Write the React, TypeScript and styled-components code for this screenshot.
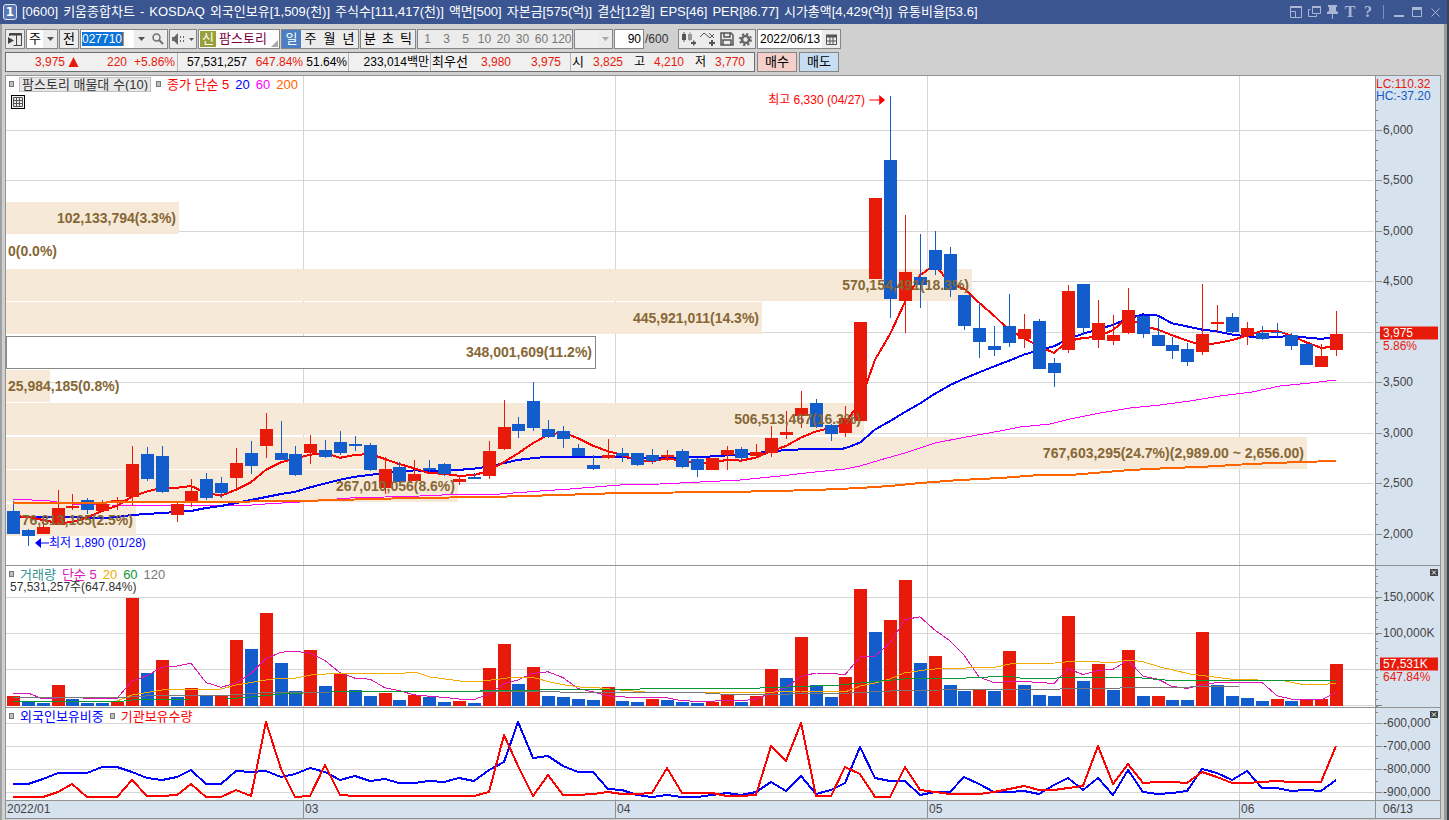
import React from "react";
import styled, { createGlobalStyle } from "styled-components";

const GlobalStyle = createGlobalStyle`
  * { box-sizing: border-box; }
  body { margin: 0; background: #c9c9c9; }
  body, button, input, select {
    font-family: "Liberation Sans", "Noto Sans CJK KR", sans-serif;
    font-size: 13px;
    line-height: 16px;
  }
`;

const RED = "#e81a0a";
const BLUE = "#125ccb";

/* ---------- data ---------- */

// [direction, high, body top, body bottom, low], in the plot's vertical units
type Candle = ["R" | "B", number, number, number, number];
const candles: Candle[] = [
  ["B", 501, 511, 534, 534], ["B", 529, 530, 536, 546], ["R", 522, 527, 534, 534], ["R", 490, 508, 525, 525],
  ["R", 494, 506, 508, 510], ["B", 498, 500, 510, 514], ["R", 500, 504, 511, 511], ["R", 497, 500, 503, 510],
  ["R", 446, 464, 497, 506], ["B", 447, 454, 479, 481], ["B", 446, 456, 492, 493], ["R", 502, 504, 515, 522],
  ["R", 479, 491, 503, 507], ["B", 473, 479, 498, 500], ["B", 477, 483, 493, 498], ["R", 448, 463, 478, 488],
  ["B", 441, 453, 466, 474], ["R", 413, 429, 446, 458], ["B", 421, 453, 460, 460], ["B", 446, 454, 475, 476],
  ["R", 435, 444, 453, 464], ["B", 440, 450, 457, 458], ["B", 431, 442, 453, 455], ["B", 436, 444, 446, 451],
  ["B", 443, 445, 470, 471], ["R", 457, 469, 488, 494], ["B", 462, 467, 482, 482], ["R", 460, 474, 481, 481],
  ["B", 460, 468, 470, 472], ["B", 463, 464, 474, 476], ["R", 476, 479, 482, 485], ["B", 473, 477, 479, 479],
  ["R", 441, 451, 476, 479], ["R", 400, 427, 449, 450], ["B", 417, 424, 431, 438], ["B", 382, 401, 428, 431],
  ["B", 420, 429, 437, 438], ["B", 426, 431, 439, 448], ["B", 444, 448, 456, 456], ["B", 455, 465, 469, 470],
  ["R", 439, 455, 458, 459], ["B", 448, 453, 456, 462], ["B", 453, 453, 465, 466], ["B", 449, 455, 461, 464],
  ["R", 450, 455, 457, 461], ["B", 449, 451, 467, 468], ["B", 458, 459, 470, 477], ["R", 458, 458, 470, 470],
  ["R", 446, 450, 455, 470], ["B", 447, 449, 458, 461], ["R", 444, 452, 456, 457], ["R", 426, 438, 453, 457],
  ["R", 411, 432, 435, 439], ["R", 391, 408, 416, 428], ["B", 399, 403, 427, 428], ["B", 424, 425, 434, 441],
  ["R", 406, 418, 433, 437], ["R", 322, 322, 421, 421], ["R", 198, 198, 279, 279], ["B", 96, 160, 299, 318],
  ["R", 215, 272, 301, 333], ["B", 234, 277, 285, 308], ["B", 231, 250, 270, 275], ["B", 247, 254, 290, 297],
  ["B", 295, 295, 326, 330], ["B", 303, 328, 342, 358], ["B", 326, 346, 350, 356], ["B", 294, 326, 343, 347],
  ["R", 314, 329, 339, 348], ["B", 319, 321, 369, 369], ["B", 358, 363, 373, 387], ["R", 285, 291, 350, 353],
  ["B", 284, 284, 328, 335], ["R", 300, 323, 340, 348], ["R", 315, 335, 341, 345], ["R", 288, 310, 333, 334],
  ["B", 315, 316, 334, 338], ["B", 318, 335, 346, 346], ["B", 337, 345, 351, 359], ["B", 343, 349, 362, 366],
  ["R", 284, 334, 352, 355], ["R", 305, 322, 324, 332], ["B", 313, 317, 332, 333], ["R", 322, 328, 336, 345],
  ["B", 326, 333, 339, 340], ["B", 323, 332, 333, 337], ["B", 333, 335, 346, 350], ["B", 343, 344, 365, 365],
  ["R", 344, 356, 367, 367], ["R", 311, 334, 350, 356],
];

const volumeTops = [
  696, 702, 703, 685, 699, 703, 703, 702, 598, 673, 660, 697, 688, 695, 696, 640, 649, 613, 663, 691,
  650, 686, 674, 690, 696, 693, 700, 695, 697, 702, 701, 703, 668, 644, 684, 667, 696, 697, 699, 700,
  687, 701, 702, 699, 700, 702, 703, 702, 694, 702, 696, 669, 678, 637, 685, 697, 677, 589, 632, 620,
  580, 663, 656, 685, 691, 690, 691, 651, 685, 695, 696, 616, 681, 664, 690, 650, 696, 696, 700, 700,
  632, 685, 696, 698, 701, 699, 701, 700, 699, 664,
];
const volumeColors =
  "RBBRBBBRRBRBRBRRBRBBRBRBBRBRBBRBRRBRBBBBRBBRBBBRRBRRBRBBRRBRRBRBBRBRBBBRBRBRBRBBRBBBBRBRRR";

const foreignShare = [
  784, 784, 779, 773, 773, 773, 767, 767, 772, 778, 780, 777, 770, 784, 784, 771, 772, 771, 777, 774,
  768, 772, 780, 776, 781, 779, 783, 783, 781, 782, 778, 781, 770, 762, 722, 758, 756, 766, 772, 772,
  789, 790, 795, 797, 795, 797, 797, 795, 793, 795, 792, 782, 791, 776, 794, 790, 783, 747, 778, 781,
  781, 795, 792, 792, 777, 784, 792, 792, 791, 794, 785, 778, 790, 778, 795, 770, 792, 794, 793, 791,
  769, 773, 780, 771, 788, 788, 791, 790, 791, 780,
];
const institutionHoldings = [
  797, 797, 797, 792, 784, 797, 797, 797, 780, 796, 796, 795, 784, 797, 797, 790, 796, 722, 769, 797,
  796, 765, 795, 796, 796, 796, 796, 796, 796, 796, 796, 796, 792, 735, 766, 796, 775, 795, 795, 794,
  792, 794, 794, 793, 768, 793, 793, 793, 796, 796, 795, 746, 761, 723, 796, 796, 767, 774, 797, 797,
  767, 790, 792, 794, 794, 794, 792, 789, 786, 790, 790, 788, 786, 746, 784, 764, 783, 782, 782, 783,
  772, 777, 783, 783, 782, 781, 782, 782, 782, 746,
];

/* ---------- chart helpers ---------- */

const centre = (i: number) => Math.round(13 + (i * 1323) / 89);

const movingAverage = (values: number[], span: number, lead: number[]) =>
  values.map((_, i) => {
    if (i < span - 1) return lead[i];
    const part = values.slice(i - span + 1, i + 1);
    return part.reduce((a, b) => a + b, 0) / span;
  });

const seriesPoints = (values: number[]) => values.map((v, i) => `${centre(i)},${v.toFixed(1)}`).join(" ");

const closes = candles.map(([dir, , top, bottom]) => (dir === "R" ? top : bottom));
const priceMa5 = movingAverage(closes, 5, [516, 517, 520, 523]);
const priceMa20 = movingAverage(
  closes, 20,
  [517, 517, 517, 517, 517, 518, 518, 517, 515, 514, 513, 512, 511, 508, 506, 503, 500, 497, 494],
);
const volumeMa5 = movingAverage(volumeTops, 5, [693, 693, 699, 698]);

const priceMa60 =
  "13,499 50,501 72,504 110,505 240,506 265,504 300,502 350,498 385,497 420,496 465,494 500,494 540,491 570,489 620,485 660,484 700,482 740,480 780,476 815,472 845,469 860,466 880,460 905,453 935,443 966,437 1000,431 1020,427 1050,424 1070,419 1100,413 1130,408 1160,405 1190,401 1220,396 1252,392 1280,386 1310,383 1336,380";
const priceMa200 =
  "13,503 200,502 300,501 410,498 490,497 560,495 620,493 730,492 815,490 860,488 890,486 920,483 960,480 1000,478 1040,475 1070,475 1130,470 1170,468 1200,467 1250,464 1300,462 1336,461";
const volumeMa20 =
  "13,702 50,701 117,701 132,695 162,690 192,689 221,689 236,685 266,680 281,678 296,678 311,675 341,673 405,673 415,672 430,677 445,679 460,681 483,681 500,679 515,677 535,678 550,682 565,685 580,687 600,688 620,690 645,692 750,693 800,691 845,692 860,686 875,683 890,679 904,673 925,670 945,668 966,668 996,667 1010,664 1055,663 1075,661 1090,661 1100,662 1117,662 1130,660 1144,662 1160,667 1190,674 1230,679 1285,681 1300,684 1320,685 1336,683";
const volumeMa60 =
  "13,701 117,702 132,700 190,699 226,699 250,697 281,694 303,693 330,692 480,691 500,690 540,690 640,689 760,688 790,687 840,685 870,682 904,679 930,678 966,678 1010,676 1020,678 1050,679 1065,677 1130,677 1165,680 1336,680";
const volumeMa120 =
  "13,697 130,697 160,695 230,695 260,693 330,692 480,692 540,691 560,692 690,692 720,694 790,694 850,693 890,691 940,690 966,689 1060,689 1070,688 1120,688 1140,687 1190,687 1240,686 1336,686";

const monthLines = [303, 615, 927, 1239];

/* top and bottom of each pane, in plot units */
const PRICE = { top: 76, height: 489 };
const VOLUME = { top: 566, height: 141 };
const HOLDING = { top: 708, height: 92 };
const PLOT_LEFT = 6;
const PLOT_WIDTH = 1369;

const px = (x: number) => `${((x - PLOT_LEFT) / PLOT_WIDTH) * 100}%`;
const py = (y: number, pane: { top: number; height: number }) => `${((y - pane.top) / pane.height) * 100}%`;

type Band = { y: number; right: number; text: string; current?: boolean };
const bands: Band[] = [
  { y: 202, right: 179, text: "102,133,794(3.3%)" },
  { y: 235, right: 6, text: "0(0.0%)" },
  { y: 269, right: 972, text: "570,154,491(18.3%)" },
  { y: 302, right: 762, text: "445,921,011(14.3%)" },
  { y: 336, right: 595, text: "348,001,609(11.2%)", current: true },
  { y: 370, right: 50, text: "25,984,185(0.8%)" },
  { y: 403, right: 864, text: "506,513,467(16.3%)" },
  { y: 437, right: 1307, text: "767,603,295(24.7%)(2,989.00 ~ 2,656.00)" },
  { y: 470, right: 458, text: "267,010,056(8.6%)" },
  { y: 504, right: 136, text: "76,813,185(2.5%)" },
];

/* ---------- window ---------- */

const Window = styled.div`
  display: flex;
  flex-direction: column;
  height: 100vh;
  min-height: 560px;
  background: #d0d0d0;
  border-right: 2px solid #3c4450;
`;

const TitleBar = styled.header`
  display: flex;
  align-items: center;
  height: 24px;
  flex: none;
  padding: 0 5px 0 3px;
  background: #3a5590;
  color: #fff;
`;

const WindowNumber = styled.span`
  width: 14px;
  height: 16px;
  margin-right: 5px;
  border: 1px solid #dfe6f5;
  border-radius: 3px;
  background: #5b78b4;
  font: bold 12px/14px "DejaVu Sans", sans-serif;
  text-align: center;
`;

const TitleText = styled.h1`
  display: flex;
  gap: 5px;
  flex: 1;
  min-width: 0;
  margin: 0;
  font-size: 13px;
  font-weight: normal;
  white-space: nowrap;
`;

const TitleButtons = styled.div`
  display: flex;
  align-items: center;
  gap: 4px;
  color: #a9b6d4;
`;

const TitleButton = styled.button`
  display: flex;
  align-items: center;
  justify-content: center;
  width: 14px;
  height: 18px;
  padding: 0;
  border: 0;
  background: none;
  color: inherit;
  font: bold 16px/18px "Liberation Serif", serif;
`;

const TitleDivider = styled.span`
  width: 1px;
  height: 14px;
  margin: 0 4px;
  background: #8090b8;
`;

/* ---------- tool bar ---------- */

const Body = styled.main`
  display: flex;
  flex-direction: column;
  flex: 1;
  min-height: 0;
  padding: 5px 3px 1px 3px;
  border-left: 2px solid #a0a0a0;
  border-right: 3px solid #9b9b9b;
`;

const Toolbar = styled.div<{ $gap: number }>`
  display: flex;
  flex: none;
  gap: ${(p) => p.$gap}px;
  height: 20px;
  margin-bottom: 3px;
`;

const Group = styled.div`
  display: flex;
  align-items: stretch;
  border: 1px solid #858585;
  background: #efefef;
  > * + * { border-left: 1px solid #a0a0a0; }
`;

const ToolButton = styled.button<{ $w?: number; $active?: boolean; $muted?: boolean }>`
  display: flex;
  align-items: center;
  justify-content: center;
  width: ${(p) => p.$w ?? 19}px;
  padding: 0;
  border: 0;
  background: ${(p) => (p.$active ? "#4a7fc4" : "#ececec")};
  color: ${(p) => (p.$active ? "#fff" : p.$muted ? "#777" : "#000")};
  font-size: ${(p) => (p.$muted ? 12 : 13)}px;
  white-space: nowrap;
`;

const Field = styled.input<{ $w: number; $align?: string }>`
  width: ${(p) => p.$w}px;
  padding: 0 2px;
  border: 0;
  background: #fff;
  color: #000;
  text-align: ${(p) => p.$align ?? "left"};
  font-size: 12px;
`;

const CodeField = styled.div`
  display: flex;
  align-items: center;
  width: 53px;
  padding: 0 1px;
  background: #fff;
`;

const CodeInput = styled.input`
  width: 42px;
  height: 14px;
  padding: 0;
  border: 0;
  border-right: 1px solid #f08020;
  background: #0a74d8;
  color: #fff;
  font-size: 12px;
`;

const PeriodSelect = styled.select`
  width: 16px;
  padding: 0 2px;
  border: 0;
  appearance: none;
  background: #fff;
`;

const EmptySelect = styled.select`
  width: 24px;
  border: 0;
  appearance: none;
  background: #efefef;
`;

const StockName = styled.button`
  display: flex;
  align-items: center;
  gap: 3px;
  width: 82px;
  padding: 0 0 0 1px;
  position: relative;
  border: 1px solid #858585;
  background: #fff;
  color: #800040;
  white-space: nowrap;
`;

const StockMark = styled.span`
  width: 16px;
  background: #97a03b;
  color: #fff;
  text-align: center;
`;

const Corner = styled.svg`
  position: absolute;
  right: 1px;
  bottom: 1px;
`;

const Total = styled.span`
  width: 32px;
  line-height: 20px;
  color: #333;
  font-size: 12px;
`;

const Quotes = styled.div`
  display: flex;
  align-items: center;
  width: 750px;
  border: 1px solid #6f6f6f;
  background: #f0f0f0;
  font-size: 12px;
`;

const QuoteCell = styled.div<{ $w: number }>`
  display: flex;
  align-items: center;
  width: ${(p) => p.$w}px;
  height: 18px;
  border-right: 1px solid #b4b4b4;
  &:last-child { border-right: 0; }
`;

const Quote = styled.span<{ $w: number; $red?: boolean }>`
  width: ${(p) => p.$w}px;
  flex: none;
  color: ${(p) => (p.$red ? RED : "#000")};
  text-align: right;
  white-space: nowrap;
`;

const QuoteLabel = styled.span<{ $w: number }>`
  width: ${(p) => p.$w}px;
  flex: none;
  padding-left: 1px;
  font-size: 13px;
  white-space: nowrap;
`;

const OrderButton = styled.button<{ $bg: string }>`
  width: 40px;
  padding: 0;
  border: 1px solid #858585;
  background: ${(p) => p.$bg};
`;

/* ---------- chart ---------- */

const ChartFrame = styled.section`
  display: grid;
  grid-template-columns: minmax(0, 1fr) 65px;
  grid-template-rows: 490fr 142fr 93fr 17px;
  flex: 1;
  min-height: 0;
  border: 1px solid #929292;
  background: #fff;
`;

const Pane = styled.div`
  position: relative;
  min-height: 0;
  overflow: hidden;
  border-bottom: 1px solid #929292;
`;

const AxisPane = styled(Pane)`
  border-left: 1px solid #929292;
  background: #d7e2ef;
`;

const Plot = styled.svg`
  display: block;
  width: 100%;
  height: 100%;
`;

const Legend = styled.div`
  position: absolute;
  top: 0;
  left: 3px;
  display: flex;
  align-items: center;
  gap: 6px;
  height: 16px;
  white-space: nowrap;
`;

const Bullet = styled.span`
  width: 5px;
  height: 6px;
  border: 1px solid #777;
  background: #c0c0c0;
`;

const LegendText = styled.span<{ $c: string; $boxed?: boolean }>`
  padding: ${(p) => (p.$boxed ? "0 2px" : "0")};
  outline: ${(p) => (p.$boxed ? "1px solid #c0c0c0" : "none")};
  background: ${(p) => (p.$boxed ? "#e8e8e8" : "none")};
  color: ${(p) => p.$c};
  line-height: 13px;
`;

const GridButton = styled.button`
  position: absolute;
  top: 19px;
  left: 5px;
  width: 14px;
  height: 14px;
  padding: 0;
  border: 1px solid #000;
  background: #eee;
  line-height: 0;
`;

const VolumeNote = styled.div`
  position: absolute;
  top: 15px;
  left: 4px;
  color: #333;
  font-size: 12px;
  line-height: 13px;
`;

const BandLabel = styled.span<{ $left?: boolean }>`
  position: absolute;
  color: #866735;
  font: bold 14px/16px "Liberation Sans", sans-serif;
  white-space: nowrap;
  transform: translate(${(p) => (p.$left ? "0" : "-100%")}, -50%);
`;

const Callout = styled.span<{ $c: string; $before?: boolean }>`
  position: absolute;
  display: flex;
  align-items: center;
  gap: ${(p) => (p.$before ? 4 : 0)}px;
  color: ${(p) => p.$c};
  font-size: 12px;
  white-space: nowrap;
  transform: translate(${(p) => (p.$before ? "-100%" : "0")}, -50%);
`;

const AxisLabel = styled.span<{ $c?: string; $x?: number }>`
  position: absolute;
  left: ${(p) => p.$x ?? 7}px;
  color: ${(p) => p.$c ?? "#444"};
  font-size: 12px;
  line-height: 12px;
  white-space: nowrap;
  transform: translateY(-50%);
`;

const PriceTag = styled(AxisLabel)`
  left: 4px;
  width: 58px;
  height: 13px;
  padding-left: 3px;
  background: ${RED};
  color: #fff;
  line-height: 13px;
`;

const CloseButton = styled.button`
  position: absolute;
  top: 3px;
  right: 2px;
  width: 8px;
  height: 7px;
  padding: 0;
  border: 0;
  background: #444;
  line-height: 0;
`;

const DateAxis = styled.div`
  position: relative;
  background: #d7e2ef;
`;

const DateLabel = styled.span<{ $line?: boolean }>`
  position: absolute;
  top: 0;
  height: 17px;
  padding-left: 1px;
  border-left: ${(p) => (p.$line ? "1px solid #929292" : "0")};
  color: #444;
  font-size: 12px;
`;

const LastDate = styled.div`
  padding-left: 7px;
  border-left: 1px solid #929292;
  background: #d7e2ef;
  color: #444;
  font-size: 12px;
`;

/* ---------- parts ---------- */

const DownArrow = ({ color = "#555" }: { color?: string }) => (
  <svg width="7" height="4" viewBox="0 0 7 4"><path d="M0 0h7L3.5 4z" fill={color} /></svg>
);

const MonthGrid = () => (
  <>
    {monthLines.map((x) => (
      <rect key={x} x={x} y="0" width="1" height="820" fill="#d6d6d6" />
    ))}
  </>
);

const HLines = ({ ys }: { ys: number[] }) => (
  <>
    {ys.map((y) => (
      <rect key={y} x="6" y={y} width="1368" height="1" fill="#d6d6d6" />
    ))}
  </>
);

const Line = ({ points, color, width = 2 }: { points: string; color: string; width?: number }) => (
  <polyline points={points} fill="none" stroke={color} strokeWidth={width} strokeLinejoin="round" vectorEffect="non-scaling-stroke" />
);

const PanePlot = ({ pane, children }: { pane: { top: number; height: number }; children: React.ReactNode }) => (
  <Plot viewBox={`${PLOT_LEFT} ${pane.top} ${PLOT_WIDTH} ${pane.height}`} preserveAspectRatio="none" shapeRendering="crispEdges">
    {children}
  </Plot>
);

const Ticks = ({ pane, major, minor }: { pane: { top: number; height: number }; major: number[]; minor: number[] }) => (
  <Plot viewBox={`0 ${pane.top} 64 ${pane.height}`} preserveAspectRatio="none" shapeRendering="crispEdges">
    {minor.map((y) => <rect key={`m${y}`} x="0" y={Math.round(y)} width="2" height="1" fill="#888" />)}
    {major.map((y) => <rect key={y} x="0" y={y} width="6" height="1" fill="#888" />)}
  </Plot>
);

const CloseMark = () => (
  <CloseButton aria-label="닫기">
    <svg width="8" height="7" viewBox="0 0 8 7"><path d="M2 1.5l4 4M6 1.5l-4 4" stroke="#fff" /></svg>
  </CloseButton>
);

const steps = (from: number, to: number, by: number) => {
  const out: number[] = [];
  for (let y = from; y < to; y += by) out.push(y);
  return out;
};

const titleFields = [
  "[0600]", "키움종합차트", "-", "KOSDAQ", "외국인보유[1,509(천)]", "주식수[111,417(천)]", "액면[500]",
  "자본금[575(억)]", "결산[12월]", "EPS[46]", "PER[86.77]", "시가총액[4,429(억)]", "유통비율[53.6]",
];

const priceLabels: [number, string][] = [
  [130, "6,000"], [180, "5,500"], [231, "5,000"], [281, "4,500"], [332, "4,000"],
  [382, "3,500"], [433, "3,000"], [483, "2,500"], [534, "2,000"],
];

export default function App() {
  return (
    <>
      <GlobalStyle />
      <Window>
        <TitleBar>
          <WindowNumber>1</WindowNumber>
          <TitleText>
            {titleFields.map((text) => <span key={text}>{text}</span>)}
          </TitleText>
          <TitleButtons>
            <TitleButton aria-label="크기">
              <svg width="12" height="12" viewBox="0 0 12 12" fill="none" stroke="currentColor">
                <path d="M.5 1.5h11v10H.5zM.5 5.5h5v6" /><path d="M0 1h12" strokeWidth="2" />
              </svg>
            </TitleButton>
            <TitleButton aria-label="복제">
              <svg width="13" height="12" viewBox="0 0 13 12" fill="none" stroke="currentColor">
                <path d="M4.5.5h8v7h-8zM2.500 3.500h-2v7h8v-2" /><path d="M4 1h9" strokeWidth="2" />
              </svg>
            </TitleButton>
            <TitleButton aria-label="고정">
              <svg width="11" height="14" viewBox="0 0 11 14" fill="currentColor">
                <path d="M1 0h9v2H9v4l2 1v2H6v5H5V9H0V7l2-1V2H1z" />
              </svg>
            </TitleButton>
            <TitleButton aria-label="글꼴">T</TitleButton>
            <TitleButton aria-label="도움말">?</TitleButton>
            <TitleDivider />
            <TitleButton aria-label="최소화">
              <svg width="10" height="12" viewBox="0 0 10 12"><path d="M0 9h10v2H0z" fill="currentColor" /></svg>
            </TitleButton>
            <TitleButton aria-label="최대화">
              <svg width="10" height="10" viewBox="0 0 10 10" fill="none" stroke="currentColor">
                <path d="M.5.5h9v9h-9z" /><path d="M0 1.500h10" strokeWidth="3" />
              </svg>
            </TitleButton>
            <TitleButton aria-label="닫기">
              <svg width="9" height="9" viewBox="0 0 9 9"><path d="M.5.5l8 8M8.500.5l-8 8" stroke="currentColor" /></svg>
            </TitleButton>
          </TitleButtons>
        </TitleBar>

        <Body>
          <Toolbar $gap={1}>
            <Group>
              <ToolButton $w={18} aria-label="메뉴">
                <svg width="14" height="13" viewBox="0 0 14 13" fill="none" stroke="#444">
                  <path d="M1.500 3V.5h12v12h-8" /><path d="M2 1.500h11" strokeWidth="2" /><path d="M8.500 2v10" />
                  <path d="M0 4l6 3.500L0 11z" fill="#444" stroke="none" />
                </svg>
              </ToolButton>
            </Group>
            <Group>
              <PeriodSelect aria-label="구분" defaultValue="주"><option>주</option></PeriodSelect>
              <ToolButton $w={14} aria-label="구분 열기"><DownArrow /></ToolButton>
            </Group>
            <Group><ToolButton $w={18}>전</ToolButton></Group>
            <Group>
              <CodeField><CodeInput aria-label="종목코드" defaultValue="027710" /></CodeField>
              <ToolButton $w={14} aria-label="종목 목록"><DownArrow /></ToolButton>
              <ToolButton aria-label="검색">
                <svg width="12" height="12" viewBox="0 0 12 12" fill="none" stroke="#707070">
                  <circle cx="4.500" cy="4.500" r="3.500" strokeWidth="1.500" /><path d="M7 7l4 4" strokeWidth="2" />
                </svg>
              </ToolButton>
            </Group>
            <Group>
              <ToolButton $w={16} aria-label="소리">
                <svg width="13" height="12" viewBox="0 0 13 12" fill="#666">
                  <path d="M0 4h2l4-4v12L2 8H0zM8 3h1v2H8zM8 7h1v2H8zM11 3h1v2h-1zM11 7h1v2h-1z" />
                </svg>
              </ToolButton>
              <ToolButton $w={10} aria-label="소리 설정">
                <svg width="5" height="3" viewBox="0 0 5 3"><path d="M0 0h5L2.500 3z" fill="#555" /></svg>
              </ToolButton>
            </Group>
            <StockName>
              <StockMark>신</StockMark>팜스토리
              <Corner width="7" height="7" viewBox="0 0 7 7"><path d="M7 0v7H0z" fill="#aaa" /></Corner>
            </StockName>
            <Group>
              {["일", "주", "월", "년"].map((t) => <ToolButton key={t} $active={t === "일"}>{t}</ToolButton>)}
            </Group>
            <Group>
              {["분", "초", "틱"].map((t) => <ToolButton key={t} $w={18}>{t}</ToolButton>)}
            </Group>
            <Group>
              {["1", "3", "5", "10", "20", "30", "60", "120"].map((t) => (
                <ToolButton key={t} $w={t === "120" ? 21 : 19} $muted>{t}</ToolButton>
              ))}
            </Group>
            <Group>
              <EmptySelect aria-label="사용자 주기" />
              <ToolButton $w={13} aria-label="주기 열기"><DownArrow color="#aaa" /></ToolButton>
            </Group>
            <Group><Field $w={28} $align="right" aria-label="조회 개수" defaultValue="90" /></Group>
            <Total>/600</Total>
            <Group>
              <ToolButton aria-label="차트 종류">
                <svg width="16" height="14" viewBox="0 0 16 14" fill="#555">
                  <path d="M1 2h4v6H1zM2.500 0h1v10h-1z" /><path d="M7 2h4v6H7zM8.500 0h1v9h-1z" fill="#999" />
                  <path d="M10 10h5v2h-5zM12 8.500h1.500v5H12z" />
                </svg>
              </ToolButton>
              <ToolButton aria-label="지표 추가">
                <svg width="16" height="14" viewBox="0 0 16 14" fill="none" stroke="#555">
                  <path d="M0 5l4-4 6 5 4-4M9 1l5 5" /><path d="M9 11h6M12 8v6" strokeWidth="2" />
                </svg>
              </ToolButton>
              <ToolButton aria-label="저장">
                <svg width="14" height="14" viewBox="0 0 14 14" fill="none" stroke="#555" strokeWidth="1.500">
                  <path d="M1 1h10l2 2v10H1zM4 1v4h6V1M3 13V8h8v5" />
                </svg>
              </ToolButton>
              <ToolButton aria-label="설정">
                <svg width="13" height="13" viewBox="0 0 13 13" fill="none" stroke="#666">
                  <circle cx="6.500" cy="6.500" r="3.500" strokeWidth="2.500" />
                  <circle cx="6.500" cy="6.500" r="5.500" strokeWidth="2" strokeDasharray="2.200 2.120" />
                </svg>
              </ToolButton>
            </Group>
            <Group>
              <Field $w={64} aria-label="날짜" defaultValue="2022/06/13" />
              <ToolButton $w={18} aria-label="달력">
                <svg width="11" height="11" viewBox="0 0 11 11" fill="none" stroke="#555">
                  <path d="M0 2h11" strokeWidth="3" /><path d="M.5 3v7.500h10V3M4 3v7M7 3v7M1 7h9" />
                </svg>
              </ToolButton>
            </Group>
          </Toolbar>

          <Toolbar $gap={2}>
            <Quotes>
              <QuoteCell $w={172}>
                <Quote $w={59} $red>3,975</Quote>
                <svg width="17" height="10" viewBox="0 0 17 10"><path d="M8.500 0l5 10h-10z" fill={RED} /></svg>
                <Quote $w={45} $red>220</Quote>
                <Quote $w={48} $red>+5.86%</Quote>
              </QuoteCell>
              <QuoteCell $w={171}>
                <Quote $w={69}>57,531,257</Quote>
                <Quote $w={56} $red>647.84%</Quote>
                <Quote $w={44}>51.64%</Quote>
              </QuoteCell>
              <QuoteCell $w={82}><Quote $w={80}>233,014백만</Quote></QuoteCell>
              <QuoteCell $w={140}>
                <QuoteLabel $w={40}>최우선</QuoteLabel>
                <Quote $w={40} $red>3,980</Quote>
                <Quote $w={50} $red>3,975</Quote>
              </QuoteCell>
              <QuoteCell $w={183}>
                <QuoteLabel $w={17}>시</QuoteLabel>
                <Quote $w={35} $red>3,825</Quote>
                <Quote $w={22}>고</Quote>
                <Quote $w={39} $red>4,210</Quote>
                <Quote $w={22}>저</Quote>
                <Quote $w={39} $red>3,770</Quote>
              </QuoteCell>
            </Quotes>
            <OrderButton $bg="#f5cfc9">매수</OrderButton>
            <OrderButton $bg="#c6ddf3">매도</OrderButton>
          </Toolbar>

          <ChartFrame>
            <Pane>
              <PanePlot pane={PRICE}>
                <HLines ys={priceLabels.map(([y]) => y)} />
                <MonthGrid />
                {bands.map((b) => (
                  <rect
                    key={b.y} x={6} y={b.y} width={b.right - 6} height={32}
                    fill={b.current ? "#fff" : "#f6e9d7"}
                    stroke={b.current ? "#888" : "none"} vectorEffect="non-scaling-stroke"
                  />
                ))}
                <Line points={priceMa60} color="#f0f" width={1} />
                <Line points={seriesPoints(priceMa20)} color="#00f" />
                <Line points={seriesPoints(priceMa5)} color="#f00" />
                {candles.map(([dir, high, top, bottom, low], i) => (
                  <g key={i} fill={dir === "R" ? RED : BLUE}>
                    <rect x={centre(i)} y={high} width="1" height={low - high} />
                    <rect x={centre(i) - 6} y={top} width="13" height={Math.max(1, bottom - top)} />
                  </g>
                ))}
                <Line points={priceMa200} color="#ff6400" />
              </PanePlot>
              {bands.map((b) => {
                const short = b.right < 100;
                return (
                  <BandLabel key={b.y} $left={short} style={{ left: px(short ? 8 : b.right - 3), top: py(b.y + 16, PRICE) }}>
                    {b.text}
                  </BandLabel>
                );
              })}
              <Callout $c="#f00" $before style={{ left: px(885), top: py(100, PRICE) }}>
                최고 6,330 (04/27)
                <svg width="16" height="10" viewBox="0 0 16 10"><path d="M0 4.500h10V0l6 5-6 5V5.500H0z" fill="#f00" /></svg>
              </Callout>
              <Callout $c="#00f" style={{ left: px(35), top: py(543, PRICE) }}>
                <svg width="14" height="10" viewBox="0 0 14 10"><path d="M14 4.500H6V0L0 5l6 5V5.500h8z" fill="#00f" /></svg>
                최저 1,890 (01/28)
              </Callout>
              <Legend>
                <Bullet />
                <LegendText $c="#333" $boxed>팜스토리 매물대 수(10)</LegendText>
                <Bullet />
                <LegendText $c="#f00">종가 단순 5</LegendText>
                <LegendText $c="#00f">20</LegendText>
                <LegendText $c="#f0f">60</LegendText>
                <LegendText $c="#ff6400">200</LegendText>
              </Legend>
              <GridButton aria-label="표 보기">
                <svg width="12" height="12" viewBox="0 0 12 12" fill="none" stroke="#555">
                  <path d="M1.500 1.500h9v9h-9zM1.500 4.500h9M1.500 7.500h9M4.500 1.500v9M7.500 1.500v9" />
                </svg>
              </GridButton>
            </Pane>
            <AxisPane>
              <Ticks pane={PRICE} major={priceLabels.map(([y]) => y)} minor={steps(99.5, 562, 10.1)} />
              {priceLabels.filter(([y]) => y !== 332).map(([y, text]) => (
                <AxisLabel key={y} style={{ top: py(y, PRICE) }}>{text}</AxisLabel>
              ))}
              <AxisLabel $c={RED} $x={0} style={{ top: py(84, PRICE) }}>LC:110.32</AxisLabel>
              <AxisLabel $c={BLUE} $x={0} style={{ top: py(96, PRICE) }}>HC:-37.20</AxisLabel>
              <AxisLabel $c={RED} style={{ top: py(346, PRICE) }}>5.86%</AxisLabel>
              <PriceTag style={{ top: py(333, PRICE) }}>3,975</PriceTag>
            </AxisPane>

            <Pane>
              <PanePlot pane={VOLUME}>
                <HLines ys={[597, 633, 669, 705]} />
                <MonthGrid />
                {volumeTops.map((y, i) => (
                  <rect key={i} x={centre(i) - 6} y={y} width="13" height={706 - y} fill={volumeColors[i] === "R" ? RED : BLUE} />
                ))}
                <Line points={seriesPoints(volumeMa5)} color="#dc14b4" width={1} />
                <Line points={volumeMa20} color="#f0aa00" width={1} />
                <Line points={volumeMa60} color="#0a9632" width={1} />
                <Line points={volumeMa120} color="#777" width={1} />
              </PanePlot>
              <Legend>
                <Bullet />
                <LegendText $c="#2f8f8f">거래량</LegendText>
                <LegendText $c="#dc14b4">단순 5</LegendText>
                <LegendText $c="#f0aa00">20</LegendText>
                <LegendText $c="#0a9632">60</LegendText>
                <LegendText $c="#777">120</LegendText>
              </Legend>
              <VolumeNote>57,531,257주(647.84%)</VolumeNote>
            </Pane>
            <AxisPane>
              <Ticks pane={VOLUME} major={[597, 633, 669, 705]} minor={steps(569, 706, 7.2)} />
              <AxisLabel style={{ top: py(597, VOLUME) }}>150,000K</AxisLabel>
              <AxisLabel style={{ top: py(633, VOLUME) }}>100,000K</AxisLabel>
              <AxisLabel $c={RED} style={{ top: py(677, VOLUME) }}>647.84%</AxisLabel>
              <PriceTag style={{ top: py(664, VOLUME) }}>57,531K</PriceTag>
              <CloseMark />
            </AxisPane>

            <Pane>
              <PanePlot pane={HOLDING}>
                <HLines ys={[723, 746, 769, 792]} />
                <MonthGrid />
                <Line points={seriesPoints(foreignShare)} color="#00f" />
                <Line points={seriesPoints(institutionHoldings)} color="#f00" />
              </PanePlot>
              <Legend>
                <Bullet />
                <LegendText $c="#00f">외국인보유비중</LegendText>
                <Bullet />
                <LegendText $c="#f00">기관보유수량</LegendText>
              </Legend>
            </Pane>
            <AxisPane>
              <Ticks pane={HOLDING} major={[723, 746, 769, 792]} minor={[712, 735, 758, 781]} />
              <AxisLabel style={{ top: py(723, HOLDING) }}>-600,000</AxisLabel>
              <AxisLabel style={{ top: py(746, HOLDING) }}>-700,000</AxisLabel>
              <AxisLabel style={{ top: py(769, HOLDING) }}>-800,000</AxisLabel>
              <AxisLabel style={{ top: py(792, HOLDING) }}>-900,000</AxisLabel>
              <CloseMark />
            </AxisPane>

            <DateAxis>
              <DateLabel style={{ left: 0 }}>2022/01</DateLabel>
              {["03", "04", "05", "06"].map((m, i) => (
                <DateLabel key={m} $line style={{ left: px(monthLines[i]) }}>{m}</DateLabel>
              ))}
            </DateAxis>
            <LastDate>06/13</LastDate>
          </ChartFrame>
        </Body>
      </Window>
    </>
  );
}
